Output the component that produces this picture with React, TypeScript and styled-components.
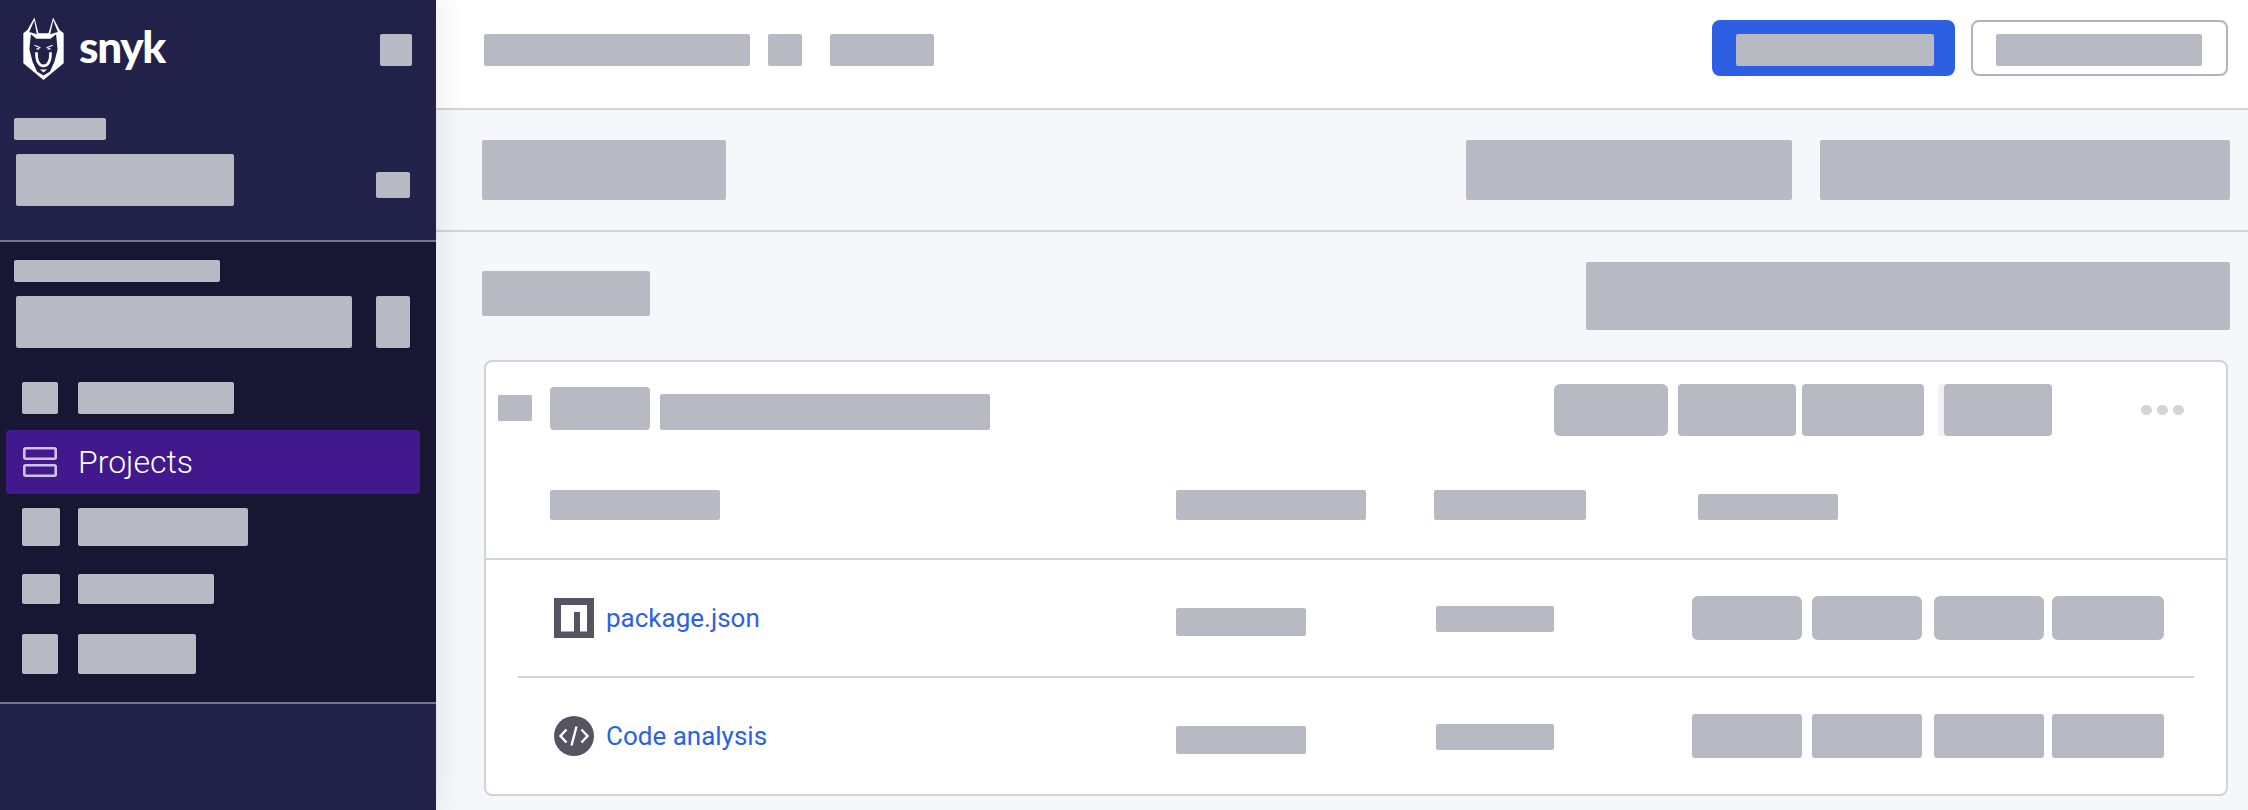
import React from 'react';
import styled, { createGlobalStyle } from 'styled-components';

const GlobalStyle = createGlobalStyle`
  html, body {
    margin: 0;
    padding: 0;
    background: #f6f7fb;
    font-family: Roboto, "Liberation Sans", sans-serif;
  }
`;

const Page = styled.div`
  display: flex;
  width: 2248px;
  height: 810px;
  overflow: hidden;
`;

// grey placeholder used everywhere the screenshot was redacted
const Skel = styled.div<{ $w: number; $h: number; $r?: number; $mt?: number; $ml?: number }>`
  flex: none;
  width: ${p => p.$w}px;
  height: ${p => p.$h}px;
  margin-top: ${p => p.$mt || 0}px;
  margin-left: ${p => p.$ml || 0}px;
  border-radius: ${p => p.$r || 2}px;
  background: #b7b9c3;
`;

const Sidebar = styled.aside`
  position: relative;
  z-index: 2;
  flex: none;
  display: flex;
  flex-direction: column;
  width: 436px;
  height: 810px;
  background: #222149;
  box-shadow: 0 0 28px rgba(40, 40, 80, 0.12);
`;

const OrgSection = styled.div`
  box-sizing: border-box;
  height: 242px;
  padding: 0 26px 0 14px;
  border-bottom: 2px solid #75748a;
`;

const LogoRow = styled.div`
  display: flex;
  align-items: flex-start;
  justify-content: space-between;
  height: 118px;
  margin-right: -2px;
  padding: 17px 0 0 9px;
  box-sizing: border-box;
`;

const Logo = styled.div`
  display: flex;
  align-items: center;
  gap: 15px;
  height: 63px;
`;

const LogoText = styled.span`
  margin-bottom: 6px;
  color: #fff;
  font-family: Lato, "Open Sans", sans-serif;
  font-size: 44px;
  font-weight: 900;
  line-height: 1;
  letter-spacing: -1.3px;
`;

const SelectRow = styled.div`
  display: flex;
  justify-content: space-between;
  margin-top: 14px;
  padding-left: 2px;
`;

const GroupSection = styled.div`
  box-sizing: border-box;
  height: 462px;
  padding-top: 18px;
  background: #171733;
  border-bottom: 2px solid #75748a;
`;

const GroupHead = styled.div`
  height: 106px;
  padding: 0 26px 0 14px;
`;

const NavRow = styled.div<{ $h: number; $active?: boolean }>`
  display: flex;
  align-items: center;
  box-sizing: border-box;
  width: 414px;
  height: ${p => p.$h}px;
  margin-left: 6px;
  padding-left: 16px;
  border-radius: 4px;
  background: ${p => (p.$active ? '#41198c' : 'transparent')};
`;

const NavIcon = styled.div`
  flex: none;
  display: flex;
  width: 56px;
`;

const ActiveIcon = styled(NavIcon)`
  padding-left: 1px;
  box-sizing: border-box;
`;

const NavLabel = styled.span`
  color: #fff;
  font-size: 32px;
  font-weight: 350;
  line-height: 1;
`;

const SidebarFoot = styled.div`
  flex: 1;
`;

const Main = styled.main`
  flex: 1;
  display: flex;
  flex-direction: column;
  min-width: 0;
  background: #f6f7fb;
`;

const TopBar = styled.header`
  box-sizing: border-box;
  display: flex;
  align-items: center;
  height: 110px;
  padding: 0 20px 12px 48px;
  background: #fff;
  border-bottom: 2px solid #d3d3da;
`;

const Crumbs = styled.div`
  display: flex;
  flex: 1;
  gap: 18px;
  margin-top: 4px;
`;

const Buttons = styled.div`
  display: flex;
  gap: 16px;
`;

const Button = styled.div<{ $primary?: boolean }>`
  box-sizing: border-box;
  display: flex;
  align-items: center;
  justify-content: center;
  height: 56px;
  padding: ${p => (p.$primary ? '4px 0 0 3px' : '4px 1px 0 0')};
  width: ${p => (p.$primary ? 243 : 257)}px;
  border-radius: 8px;
  background: ${p => (p.$primary ? '#2d5fe3' : '#fff')};
  border: 2px solid ${p => (p.$primary ? '#2d5fe3' : '#b3b2bd')};
`;

const FilterBar = styled.div`
  box-sizing: border-box;
  display: flex;
  height: 122px;
  padding: 30px 18px 0 46px;
  border-bottom: 2px solid #d3d3da;
`;

const FilterRight = styled.div`
  display: flex;
  gap: 28px;
  margin-left: auto;
`;

const ListBar = styled.div`
  display: flex;
  justify-content: space-between;
  padding: 30px 18px 0 46px;
`;

const Card = styled.section`
  box-sizing: border-box;
  height: 436px;
  margin: 30px 20px 0 48px;
  border: 2px solid #d3d3da;
  border-radius: 8px;
  background: #fff;
`;

const CardHead = styled.div`
  box-sizing: border-box;
  height: 198px;
  padding-top: 22px;
  border-bottom: 2px solid #d3d3da;
`;

const CardTitle = styled.div`
  display: flex;
  align-items: flex-start;
  height: 52px;
  padding-left: 12px;
`;

const Pills = styled.div`
  display: flex;
  margin-left: auto;
`;

const GhostPill = styled.div`
  margin-left: 14px;
  padding-left: 6px;
  border-radius: 4px;
  background: #f1f1f3;
`;

const Dots = styled.div`
  display: flex;
  align-items: center;
  gap: 5px;
  height: 52px;
  margin-left: 89px;
  padding-right: 42px;
`;

const Dot = styled.span`
  width: 11px;
  height: 10px;
  border-radius: 50%;
  background: #d3d3da;
`;

const Grid = styled.div`
  display: grid;
  grid-template-columns: 626px 258px 258px 1fr;
  align-items: center;
`;

const ColHead = styled(Grid)`
  margin-top: 54px;
  padding-left: 64px;
  align-items: end;
`;

const Row = styled(Grid)<{ $h: number; $line?: boolean }>`
  box-sizing: border-box;
  height: ${p => p.$h}px;
  margin: 0 32px;
  padding-left: 32px;
  border-bottom: ${p => (p.$line ? '2px solid #d3d3da' : 'none')};
`;

const NameCell = styled.div`
  display: flex;
  align-items: center;
  gap: 12px;
  padding-left: 4px;
`;

const FileLink = styled.a`
  color: #2d5fe3;
  font-size: 26px;
  line-height: 1;
`;

const ActionCell = styled.div`
  display: flex;
`;

const LogoMark = () => (
  <svg width="41" height="63" viewBox="0 0 40 62.5">
    <path fill="#fff" d="M0 16 L4 13 L11 0.5 L15 16 H25 L29.5 0.5 L36 13 L40 16 V46 L20 62.5 L0 46 Z" />
    <path fill="#222149" d="M5.8 15 L10.8 3.5 L13.4 17 Z M34.2 15 L29.7 3.5 L26.6 17 Z" />
    <path
      fill="#222149"
      d="M7.5 17 L13 21.5 H27 L32.5 17 L34 32 L31 44 L26.5 54 L20 58 L13.5 54 L9 44 L6 32 Z"
    />
    <path fill="none" stroke="#fff" strokeWidth="2.6" d="M13 35 C13 43 15 48.5 20 48.5 C25 48.5 27 43 27 35" />
    <path fill="none" stroke="#fff" strokeWidth="1" d="M11 28 L17 30.5 M29 28 L23 30.5" />
    <ellipse cx="14.5" cy="31.5" rx="1.7" ry="1.1" fill="#d5d5e0" />
    <ellipse cx="25.5" cy="31.5" rx="1.7" ry="1.1" fill="#d5d5e0" />
    <path fill="#fff" d="M16.5 52 H23.5 L20 55 Z" />
  </svg>
);

const ProjectsIcon = () => (
  <svg width="34" height="30" viewBox="0 0 34 30" fill="none" stroke="#cfc3e6" strokeWidth="2.6">
    <rect x="1.3" y="1.3" width="31.4" height="10.4" rx="1.2" />
    <rect x="1.3" y="18.3" width="31.4" height="10.4" rx="1.2" />
  </svg>
);

const NpmIcon = () => (
  <svg width="40" height="40" viewBox="0 0 40 40">
    <rect width="40" height="40" fill="#555463" />
    <path fill="#fff" d="M7 7 H33 V33.5 H26 V14 H20 V33.5 H7 Z" />
  </svg>
);

const CodeIcon = () => (
  <svg width="40" height="40" viewBox="0 0 40 40">
    <circle cx="20" cy="20" r="20" fill="#555463" />
    <path
      fill="none"
      stroke="#fff"
      strokeWidth="2.4"
      d="M12.5 13.5 L6.5 20 L12.5 26.5 M27.5 13.5 L33.5 20 L27.5 26.5 M22.5 10.5 L17.5 29.5"
    />
  </svg>
);

const rowPills = [
  { w: 110, ml: 0 },
  { w: 110, ml: 10 },
  { w: 110, ml: 12 },
  { w: 112, ml: 8 },
];

export default function App() {
  return (
    <Page>
      <GlobalStyle />
      <Sidebar>
        <OrgSection>
          <LogoRow>
            <Logo>
              <LogoMark />
              <LogoText>snyk</LogoText>
            </Logo>
            <Skel $w={32} $h={32} $mt={17} />
          </LogoRow>
          <Skel $w={92} $h={22} />
          <SelectRow>
            <Skel $w={218} $h={52} />
            <Skel $w={34} $h={26} $mt={18} />
          </SelectRow>
        </OrgSection>
        <GroupSection>
          <GroupHead>
            <Skel $w={206} $h={22} />
            <SelectRow>
              <Skel $w={336} $h={52} />
              <Skel $w={34} $h={52} />
            </SelectRow>
          </GroupHead>
          <NavRow $h={64}>
            <NavIcon><Skel $w={36} $h={32} /></NavIcon>
            <Skel $w={156} $h={32} />
          </NavRow>
          <NavRow $h={64} $active>
            <ActiveIcon><ProjectsIcon /></ActiveIcon>
            <NavLabel>Projects</NavLabel>
          </NavRow>
          <NavRow $h={66}>
            <NavIcon><Skel $w={38} $h={38} /></NavIcon>
            <Skel $w={170} $h={38} />
          </NavRow>
          <NavRow $h={58}>
            <NavIcon><Skel $w={38} $h={30} /></NavIcon>
            <Skel $w={136} $h={30} />
          </NavRow>
          <NavRow $h={72}>
            <NavIcon><Skel $w={36} $h={40} /></NavIcon>
            <Skel $w={118} $h={40} />
          </NavRow>
        </GroupSection>
        <SidebarFoot />
      </Sidebar>
      <Main>
        <TopBar>
          <Crumbs>
            <Skel $w={266} $h={32} />
            <Skel $w={34} $h={32} />
            <Skel $w={104} $h={32} $ml={10} />
          </Crumbs>
          <Buttons>
            <Button $primary><Skel $w={198} $h={32} /></Button>
            <Button><Skel $w={206} $h={32} /></Button>
          </Buttons>
        </TopBar>
        <FilterBar>
          <Skel $w={244} $h={60} />
          <FilterRight>
            <Skel $w={326} $h={60} />
            <Skel $w={410} $h={60} />
          </FilterRight>
        </FilterBar>
        <ListBar>
          <Skel $w={168} $h={45} $mt={9} />
          <Skel $w={644} $h={68} />
        </ListBar>
        <Card>
          <CardHead>
            <CardTitle>
              <Skel $w={34} $h={26} $r={1} $mt={11} />
              <Skel $w={100} $h={43} $r={4} $mt={3} $ml={18} />
              <Skel $w={330} $h={36} $mt={10} $ml={10} />
              <Pills>
                <Skel $w={114} $h={52} $r={6} />
                <Skel $w={118} $h={52} $r={4} $ml={10} />
                <Skel $w={122} $h={52} $r={4} $ml={6} />
                <GhostPill>
                  <Skel $w={108} $h={52} $r={4} />
                </GhostPill>
              </Pills>
              <Dots>
                <Dot />
                <Dot />
                <Dot />
              </Dots>
            </CardTitle>
            <ColHead>
              <Skel $w={170} $h={30} />
              <Skel $w={190} $h={30} />
              <Skel $w={152} $h={30} />
              <Skel $w={140} $h={26} $ml={6} />
            </ColHead>
          </CardHead>
          <Row $h={118} $line>
            <NameCell>
              <NpmIcon />
              <FileLink>package.json</FileLink>
            </NameCell>
            <Skel $w={130} $h={28} $mt={8} />
            <Skel $w={118} $h={26} $ml={2} $mt={2} />
            <ActionCell>
              {rowPills.map(p => <Skel key={p.ml} $w={p.w} $h={44} $ml={p.ml} $r={6} />)}
            </ActionCell>
          </Row>
          <Row $h={116}>
            <NameCell>
              <CodeIcon />
              <FileLink>Code analysis</FileLink>
            </NameCell>
            <Skel $w={130} $h={28} $mt={8} />
            <Skel $w={118} $h={26} $ml={2} $mt={2} />
            <ActionCell>
              {rowPills.map(p => <Skel key={p.ml} $w={p.w} $h={44} $ml={p.ml} $r={3} />)}
            </ActionCell>
          </Row>
        </Card>
      </Main>
    </Page>
  );
}
